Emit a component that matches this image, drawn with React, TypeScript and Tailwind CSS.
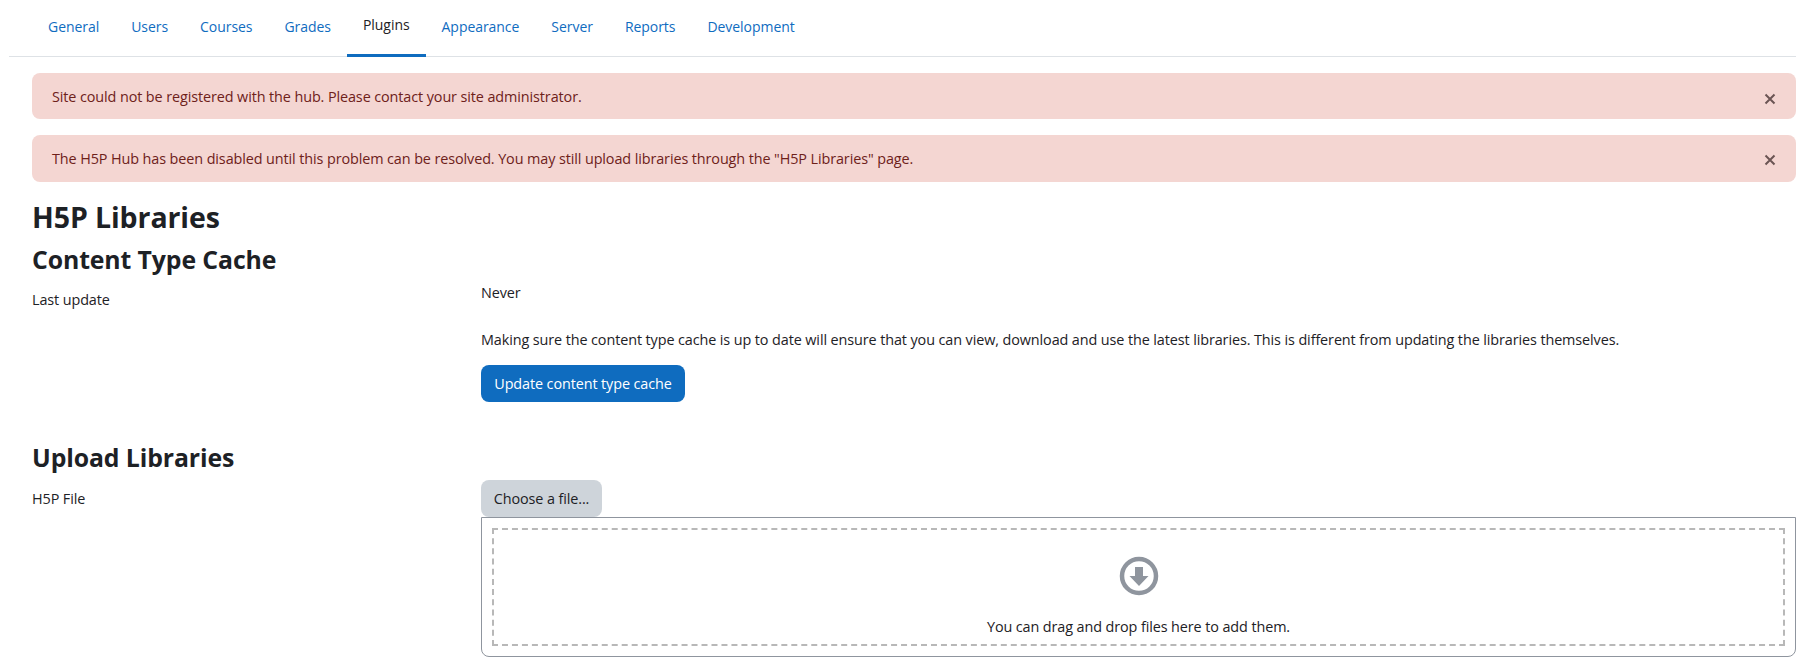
const tabs = ["General", "Users", "Courses", "Grades", "Plugins", "Appearance", "Server", "Reports", "Development"];

function Alert({ text, className }: { text: string; className: string }) {
  return (
    <div className={`ml-8 flex items-center justify-between rounded-lg bg-[#f4d6d2] pl-5 pr-[20px] text-[#6e211a] ${className}`}>
      <span>{text}</span>
      <svg width="12" height="12" viewBox="0 0 12 12" className="mt-[3px] text-[#6b5554]">
        <path d="M1.5 1.5l9 9M10.5 1.5l-9 9" stroke="currentColor" strokeWidth="2" />
      </svg>
    </div>
  );
}

export default function App() {
  return (
    <div className="h-[661px] w-[1796px] overflow-hidden bg-white font-['Open_Sans',sans-serif] text-[14.4px] tracking-[-0.1px] text-[#1d2125]">
      <nav className="ml-[9px] flex h-[57px] border-b border-[#dee2e6] pl-[23px] text-[14px] tracking-[-0.05px]">
        {tabs.map((t) => (
          <a
            key={t}
            href="#"
            className={`-mb-px flex h-[57px] items-center px-4 pb-[5px] ${t === "Plugins" ? "border-b-[3px] border-[#0f6cbf] text-[#1d2125]" : "text-[#0f6cbf]"}`}
          >
            {t}
          </a>
        ))}
      </nav>

      <Alert className="mt-4 h-[46px] pt-[2px]" text="Site could not be registered with the hub. Please contact your site administrator." />
      <Alert className="mt-4 h-[47px]" text={'The H5P Hub has been disabled until this problem can be resolved. You may still upload libraries through the "H5P Libraries" page.'} />

      <div className="pl-8">
        <h1 className="mt-[18px] text-[28.5px] leading-[34px] font-bold">H5P Libraries</h1>
        <h2 className="mt-[11px] text-[24.8px] leading-[28px] font-bold">Content Type Cache</h2>

        <div className="flex">
          <div className="mt-[16px] w-[449px]">Last update</div>
          <div className="mt-[9px]">
            <div className="leading-[21px]">Never</div>
            <p className="mt-[26px] leading-[21px]">
              Making sure the content type cache is up to date will ensure that you can view, download and use the latest libraries. This is different from updating the libraries themselves.
            </p>
            <button className="mt-[15px] h-[37px] w-[204px] rounded-lg bg-[#0f6cbf] text-white">Update content type cache</button>
          </div>
        </div>

        <h2 className="mt-[41px] text-[24.8px] leading-[28px] font-bold">Upload Libraries</h2>

        <div className="mt-[9px] flex">
          <div className="mt-[8px] w-[449px]">H5P File</div>
          <div className="flex-1">
            <button className="h-[37px] w-[121px] rounded-lg bg-[#ced4da] text-[#1d2125]">Choose a file...</button>
            <div className="h-[140px] rounded-b-lg border border-[#8f959e] p-[10px]">
              <div className="flex h-[118px] flex-col items-center border-2 border-dashed border-[#b8b8b8] pt-[26px]">
                <svg width="40" height="40" viewBox="0 0 40 40" className="text-[#8f959e]">
                  <circle cx="20" cy="20" r="17" fill="none" stroke="currentColor" strokeWidth="4.5" />
                  <path d="M16 11h8v9h5.5L20 30l-9.5-10H16z" fill="currentColor" />
                </svg>
                <div className="mt-[20px]">You can drag and drop files here to add them.</div>
              </div>
            </div>
          </div>
        </div>
      </div>
    </div>
  );
}
